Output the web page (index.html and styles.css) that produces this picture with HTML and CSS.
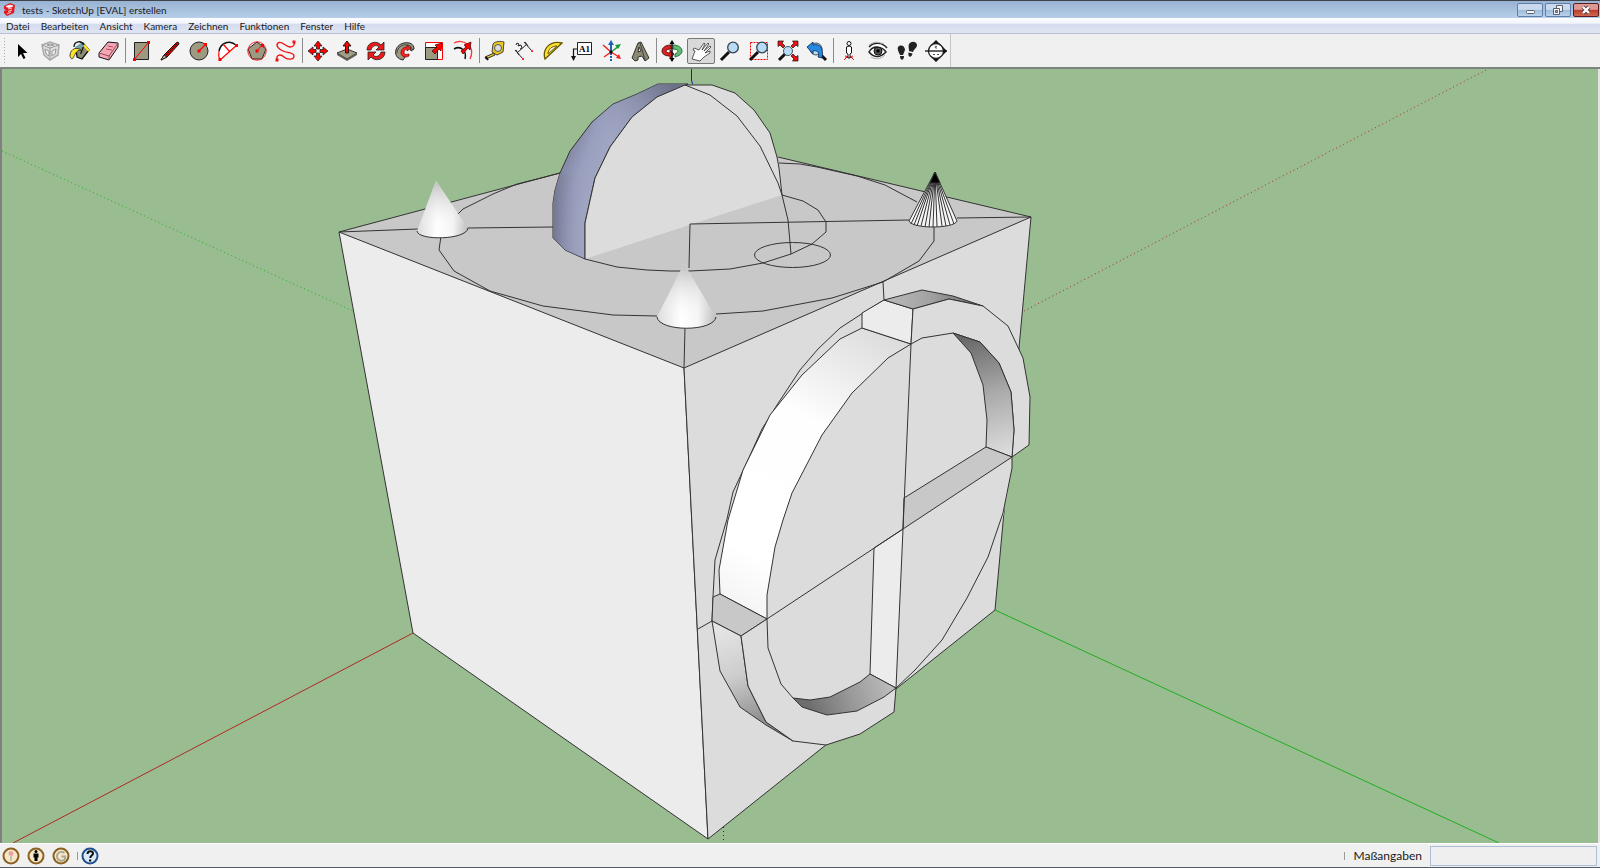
FILE: index.html
```html
<!DOCTYPE html>
<html lang="de">
<head>
<meta charset="utf-8">
<title>tests - SketchUp [EVAL] erstellen</title>
<link rel="stylesheet" href="styles.css">
</head>
<body>
<header class="titlebar">
  <svg class="logo" viewBox="0 0 12 13" aria-hidden="true"><path d="M1 3 7 0l5 2-1 8-7 3-3-3V8l2-1-2-1z" fill="#e01b22"/><path d="M3 3.500 7 2l3 1-4 1.500zM5 6l4-1M5 8.500 9 7M4 11l4-2" stroke="#fff" fill="#fff" stroke-width=".8"/></svg>
  <h1 class="title">tests - SketchUp [EVAL] erstellen</h1>
  <div class="winbtns">
    <button class="win" aria-label="Minimieren"><svg viewBox="0 0 24 12"><rect x="8.500" y="6.500" width="8" height="3" rx="1" fill="#f6f6f6" stroke="#59616e"/></svg></button>
    <button class="win" aria-label="Wiederherstellen"><svg viewBox="0 0 24 12"><g fill="#f4f4f4" stroke="#59616e"><path d="M10.500 1.500h6v6h-6z"/><path d="M7.500 4.500h6v6h-6z"/><path d="M9.500 6.500h2v2h-2z" fill="#8ea8c8"/></g></svg></button>
    <button class="win close" aria-label="Schließen"><svg viewBox="0 0 24 12"><path d="m9 3 6 6m0-6-6 6" stroke="#5a3b40" stroke-width="4"/><path d="m9 3 6 6m0-6-6 6" stroke="#fff" stroke-width="2.400"/></svg></button>
  </div>
</header>

<nav class="menubar">
  <button>Datei</button><button>Bearbeiten</button><button>Ansicht</button><button>Kamera</button><button>Zeichnen</button><button>Funktionen</button><button>Fenster</button><button>Hilfe</button>
</nav>

<div class="toolrow">
<div class="toolbar" role="toolbar" aria-label="Werkzeuge">
  <button aria-label="Auswählen"><svg viewBox="0 0 22 22"><path d="M7 4v13l3-3 2.500 5 2-1-2.500-5h4.500z" fill="#000"/></svg></button>
  <button aria-label="Komponente"><svg viewBox="0 0 22 22"><path d="m2 5 8-3 9 3-1 10-8 5-6-5z" fill="#ddd" stroke="#aaa" stroke-width="1.500"/><path d="m2 5 8 3 9-3M10 8v12M5 9l4 2v5l-3-2zM12 11l4-2-1 5-3 2zM7 5l3-1 4 1-4 1z" fill="#eee" stroke="#999"/></svg></button>
  <button aria-label="Farbeimer"><svg viewBox="0 0 22 22"><path d="m7 9 7-6 6 7-7 9-5-2z" fill="#8d8b72" stroke="#111" stroke-width="1.300"/><path d="M5 7c0-6 8-7 9-2s-3 7-2 9" fill="none" stroke="#111" stroke-width="1.300"/><path d="m6 7 6-4 3 3-7 5z" fill="#6fa1ad"/><path d="M1 15c1-7 7-8 11-5-5 0-6 5-8 8-1 2-3 0-3-3z" fill="#ffe51f" stroke="#222" stroke-width=".8"/><path d="m15 5 5 6" stroke="#ffe51f" stroke-width="2"/></svg></button>
  <button aria-label="Radiergummi"><svg viewBox="0 0 22 22"><path d="M1 13 10 2l10 1v4l-9 13-10-3z" fill="#f5a7b5" stroke="#111"/><path d="m1 13 10 3 9-13M11 16v4" fill="none" stroke="#9a4c5c"/><path d="m8 9 6 1m-4-4 5 1" stroke="#b24b60"/></svg></button>
  <span class="sep"></span>
  <button aria-label="Rechteck"><svg viewBox="0 0 22 22"><path d="M4.500 2.500h14v17h-14z" fill="#9c9a80" stroke="#222"/><path d="m4 20 15-18" stroke="#f00"/><path d="M3 18h3v3H3zM17 1h3v3h-3z" fill="#f00"/></svg></button>
  <button aria-label="Linie"><svg viewBox="0 0 22 22"><path d="M2 20 5 15 17 3l2-1 1 2L8 17z" fill="#dc0000" stroke="#111"/><path d="m2 20 3-5 3 2z" fill="#c6b98f" stroke="#111" stroke-width=".8"/><path d="M7 15 18 4" stroke="#500"/></svg></button>
  <button aria-label="Kreis"><svg viewBox="0 0 22 22"><circle cx="11" cy="11" r="9" fill="#9c9a80" stroke="#222"/><path d="m11 11 7-7" stroke="#f00" stroke-width="1.300"/><path d="M9.500 9.500h3v3h-3zM16 3h3v3h-3z" fill="#f00"/></svg></button>
  <button aria-label="Bogen"><svg viewBox="0 0 22 22"><path d="M3 20Q1 15 2 11C4 2 13 0 20 5z" fill="#fff"/><path d="M2 11C4 2 13 0 19 5" fill="none" stroke="#111" stroke-width="1.500"/><path d="M2 11Q1 16 3 20L20 5M6 4l7 8" fill="none" stroke="#f00" stroke-width="1.200"/><path d="M1.500 18h3v3h-3zM18 4h3v3h-3z" fill="#f00"/></svg></button>
  <button aria-label="Polygon"><svg viewBox="0 0 22 22"><path d="m11 2 9 7-4 10H6L2 9z" fill="#9c9a80" stroke="#222"/><circle cx="11" cy="11" r="9.200" fill="none" stroke="#e22"/><path d="m11 11 5-6" stroke="#f00"/><path d="M9.500 9.500h3v3h-3zM15 4h3v3h-3z" fill="#f00"/></svg></button>
  <button aria-label="Freihand"><svg viewBox="0 0 22 22"><path d="M2 20C1 14 6 14 9 17s10 3 10-1-7-3-11-5-8-5-5-8 8 4 12 4 5-3 4-5" fill="none" stroke="#e11" stroke-width="1.300"/><path d="M.5 18.500h3v3h-3zM17.500 .5h3v3h-3z" fill="#e11"/></svg></button>
  <span class="sep"></span>
  <button aria-label="Verschieben"><svg viewBox="0 0 22 22"><g fill="#f00" stroke="#222" stroke-width=".8"><path d="M11 1l4 5h-2.500v3h-3V6H7z"/><path d="M11 21l4-5h-2.500v-3h-3v3H7z"/><path d="M1 11l5-4v2.500h3v3H6V15z"/><path d="M21 11l-5-4v2.500h-3v3h3V15z"/></g></svg></button>
  <button aria-label="Drücken/Ziehen"><svg viewBox="0 0 22 22"><path d="m1 13 10-4 10 4-10 6z" fill="#a09e84" stroke="#333"/><path d="m1 13 10 6 10-6v2l-10 6-10-6z" fill="#626052"/><path d="m11 1 4 5h-2.500v7h-3V6H7z" fill="#f00" stroke="#111" stroke-width=".9"/></svg></button>
  <button aria-label="Drehen"><svg viewBox="0 0 22 22"><g fill="#f01818" stroke="#222" stroke-width=".8"><path d="M2 10C2 2 12 0 16 5l3-3v8h-8l3-3c-3-3-7-1-8 3z"/><path d="M20 12c0 8-10 10-14 5l-3 3v-8h8l-3 3c3 3 7 1 8-3z"/></g></svg></button>
  <button aria-label="Folge mir"><svg viewBox="0 0 22 22"><path d="M9 20C-2 18 0 5 10 3c6-1 10 1 10 6l-3 2c0-4-9-4-9 1 0 3 3 5 3 5z" fill="#9c9a80" stroke="#222"/><path d="M3 13c0-5 5-9 10-8 3 0 5 2 5 5" stroke="#444" fill="none"/><path d="M15 16c-5 3-8-1-8-3 0-4 3-6 6-6V5l4 3-4 3V9c-2 0-3 2-3 4 0 1 2 2 5 1z" fill="#f22" stroke="#700" stroke-width=".7"/></svg></button>
  <button aria-label="Skalieren"><svg viewBox="0 0 22 22"><path d="M2.500 2.500h17v17h-17z" fill="#fff" stroke="#f00"/><path d="M2.500 7.500h12v12h-12z" fill="#9c9a80" stroke="#222"/><path d="m19 3-1 8-2-2-4 5-3-3 5-4-2-2z" fill="#f00" stroke="#400" stroke-width=".7"/></svg></button>
  <button aria-label="Versatz"><svg viewBox="0 0 22 22"><path d="M2 3c9-5 22 3 16 16" fill="none" stroke="#f33" stroke-width="1.300"/><path d="M2 9c7-4 13 2 11 10" fill="none" stroke="#111" stroke-width="1.500"/><path d="m19 2-1 8-2-2-5 6-2-3 5-4-2-2z" fill="#f00" stroke="#400" stroke-width=".7"/></svg></button>
  <span class="sep"></span>
  <button aria-label="Maßband"><svg viewBox="0 0 22 22"><path d="m1 17 9-4 1 2-9 4z" fill="#e9c818" stroke="#333"/><path d="M9 4c2-3 8-3 11-2l-1 10-6 3-5-3z" fill="#e9c818" stroke="#444"/><circle cx="14" cy="8" r="3.500" fill="#ddd" stroke="#555"/><path d="m2 17 2 3" stroke="#111" stroke-width="2"/></svg></button>
  <button aria-label="Bemaßung"><svg viewBox="0 0 22 22"><path d="m4 13 10-9M2 10l8 9M11 2l8 9M3 10l3 5M12 2l3 4" fill="none" stroke="#222"/><path d="m3 5 1-2 2 1-1 2 3-1 1 3-2 1" fill="none" stroke="#222"/><path d="M9 18h2v2H9zM18 10h2v2h-2z" fill="#e33"/></svg></button>
  <button aria-label="Winkelmesser"><svg viewBox="0 0 22 22"><path d="M3 19C0 9 8 0 20 3z" fill="#ffe22e" stroke="#665900" stroke-width="1.300"/><path d="M6 14c0-5 4-8 9-8z" fill="#f0f0f0" stroke="#665900"/></svg></button>
  <button aria-label="Text"><svg viewBox="0 0 22 22"><path d="M6.500 2.500h14v12h-14z" fill="#fff" stroke="#222"/><path d="M6 9H2.500v9" fill="none" stroke="#111" stroke-width="1.200"/><path d="M0 16h5l-2.500 5z" fill="#111"/><text x="8" y="12" class="icontext">A1</text></svg></button>
  <button aria-label="Achsen"><svg viewBox="0 0 22 22"><path d="M11 3v9" stroke="#1f5fb5" stroke-width="2"/><path d="m8 5 3-5 3 5z" fill="#1f5fb5"/><path d="M11 13v8" stroke="#1f5fb5" stroke-width="2" stroke-dasharray="2 1"/><path d="m11 12 8-6" stroke="#159a35" stroke-width="1.500"/><path d="m15 5 6-1-3 5z" fill="#159a35"/><path d="m11 12 8 5M3 5l8 7-7 5" fill="none" stroke="#e22" stroke-width="1.400"/><path d="m21 19-2-5-3 4z" fill="#e22"/><circle cx="11" cy="12" r="1.500"/></svg></button>
  <button aria-label="3D-Text"><svg viewBox="0 0 22 22"><path d="m3 18 6-15 3-1 8 16-4 3-3-5-4 1v3l-3 1z" fill="#8b8970" stroke="#333"/><path d="m9 12 1-5 2 4z" fill="#f0f0f0" stroke="#333"/><path d="m11 3 5 17" stroke="#444"/></svg></button>
  <span class="sep"></span>
  <button aria-label="Rotieren"><svg viewBox="0 0 22 22"><path d="M10 5C4 5 1 8 1 11s3 5 8 5v3l4-5-4-4v3c-3 0-4-1-4-2s2-2 5-2z" fill="#d92323" stroke="#400" stroke-width=".8"/><path d="M12 5c6 0 9 3 9 6s-3 5-7 6v-3c2-1 3-2 3-3s-2-2-5-2z" fill="#62bd72" stroke="#153" stroke-width=".8"/><path d="M11 2v18" stroke="#111" stroke-width="1.500"/><path d="m8.500 4 2.500-4 2.500 4zM8.500 18l2.500 4 2.500-4z"/></svg></button>
  <button class="active" aria-label="Schwenken" aria-pressed="true"><svg viewBox="0 0 22 22"><path d="m2 19 3-8-2-1 1-2 5 2 5-7 1 1-3 6 6-7 1 1-5 7 6-5 1 1-6 6 5-2v2l-6 4-4 4-4-1z" fill="#fff" stroke="#333" stroke-width=".8"/></svg></button>
  <button aria-label="Zoomen"><svg viewBox="0 0 22 22"><path d="m2 20 8-8" stroke="#111" stroke-width="3"/><circle cx="14" cy="7.500" r="5.300" fill="#b9dcf5" stroke="#345" stroke-width="1.300"/></svg></button>
  <button aria-label="Fenster zoomen"><svg viewBox="0 0 22 22"><path d="M2.500 2.500h17v17h-17z" fill="none" stroke="#f00" stroke-dasharray="2 1"/><path d="m2 20 8-8" stroke="#111" stroke-width="3"/><circle cx="14" cy="7.500" r="5.300" fill="#b9dcf5" stroke="#345" stroke-width="1.300"/></svg></button>
  <button aria-label="Alles zoomen"><svg viewBox="0 0 22 22"><path d="m2 20 6-6" stroke="#111" stroke-width="3"/><circle cx="11" cy="11" r="4.500" fill="#b9dcf5" stroke="#456"/><g fill="#e11" stroke="#111" stroke-width=".7"><path d="M1 1h5.500L5 3l3 3-2 2-3-3-2 1.500z"/><path d="M21 1h-5.500L17 3l-3 3 2 2 3-3 2 1.500z"/><path d="M21 21h-5.500l1.500-2-3-3 2-2 3 3 2-1.500z"/></g></svg></button>
  <button aria-label="Vorherige Ansicht"><svg viewBox="0 0 22 22"><path d="m13 13 7 7" stroke="#111" stroke-width="3"/><circle cx="10" cy="9" r="6" fill="#b9dcf5" stroke="#456"/><path d="m1 7 6-5v3c7-2 11 3 9 13l-4-1c2-5-1-7-5-6v3z" fill="#2588e2" stroke="#124" stroke-width=".8"/></svg></button>
  <span class="sep"></span>
  <button aria-label="Kamera positionieren"><svg viewBox="0 0 22 22"><path d="m11 15-5 5m5-5 5 5M7 16l8 2m0-2-8 2" stroke="#e22" fill="none"/><circle cx="11" cy="3.500" r="2" fill="#fff" stroke="#111"/><path d="M8.500 7q2.500-2 5 0v6l-1.500 1v4h-2v-4l-1.500-1z" fill="#fff" stroke="#111"/></svg></button>
  <button aria-label="Umsehen"><svg viewBox="0 0 22 22"><path d="M2 7c5-5 13-5 18 1M2 12c4-7 13-6 17 0-6 6-12 6-17 0z" fill="#fff" stroke="#222" stroke-width="1.500"/><circle cx="11" cy="11" r="4" fill="#555" stroke="#111"/><circle cx="11" cy="11" r="1.800" fill="#000"/><path d="M4 17c5 3 10 2 14-2M2 5c5-4 10-3 15-1" fill="none" stroke="#aaa"/></svg></button>
  <button aria-label="Gehen"><svg viewBox="0 0 22 22"><path d="M2 7c3-3 7-1 7 3l-2 5H4C3 12 1 10 2 7zM4 16h4c0 5-4 5-4 0zM13 4c3-4 8-2 8 1s-3 4-4 7l-4-1c0-3-1-5 0-7zM12.500 12.500l4 1c-1 5-5 4-4-1z" fill="#222"/></svg></button>
  <button aria-label="Schnittebene"><svg viewBox="0 0 22 22"><path d="m11 0 5 5H6zM11 22l5-5H6zM22 11l-5-5v10z" fill="#111"/><circle cx="11" cy="11" r="7.500" fill="#fff" stroke="#222" stroke-width="1.300"/><path d="M0 11h22" stroke="#111" stroke-width="1.300"/><path d="M12 6.500q-2-1-2 .5t2 1M8 14.500h2m2 0h2" fill="none" stroke="#555"/></svg></button>
</div>
</div>

<main class="viewport">
<svg viewBox="2 69 1596 774" preserveAspectRatio="xMidYMid slice" role="img" aria-label="3D-Modell">
  <defs>
    <linearGradient id="cone" x1="0" x2="1"><stop offset="0" stop-color="#d8d8d8"/><stop offset=".4" stop-color="#fff"/><stop offset=".7" stop-color="#f4f4f4"/><stop offset="1" stop-color="#b4b4b4"/></linearGradient>
    <linearGradient id="coneShade" x1="0" x2="0" y1="0" y2="1"><stop offset="0" stop-color="#b8b8b8" stop-opacity=".9"/><stop offset=".85" stop-color="#fff" stop-opacity=".1"/></linearGradient>
    <linearGradient id="dome" gradientUnits="userSpaceOnUse" x1="566" y1="140" x2="604" y2="155"><stop offset="0" stop-color="#7b7f9b"/><stop offset=".6" stop-color="#999fbe"/><stop offset="1" stop-color="#a0a5c2"/></linearGradient>
    <linearGradient id="domeLow" gradientUnits="userSpaceOnUse" x1="553" y1="0" x2="590" y2="0"><stop offset="0" stop-color="#72768f"/><stop offset=".6" stop-color="#9499b7" stop-opacity=".5"/><stop offset="1" stop-color="#a0a5c2" stop-opacity="0"/></linearGradient>
    <linearGradient id="domeTop" gradientUnits="userSpaceOnUse" x1="670" y1="83" x2="610" y2="140"><stop offset="0" stop-color="#6c7088"/><stop offset="1" stop-color="#9298b8" stop-opacity="0"/></linearGradient>
    <linearGradient id="band" gradientUnits="userSpaceOnUse" x1="880" y1="330" x2="720" y2="610"><stop offset="0" stop-color="#dcdcdc"/><stop offset=".35" stop-color="#fefefe"/><stop offset=".8" stop-color="#fff"/><stop offset="1" stop-color="#f2f2f2"/></linearGradient>
    <linearGradient id="arc" gradientUnits="userSpaceOnUse" x1="970" y1="335" x2="1000" y2="455"><stop offset="0" stop-color="#666"/><stop offset=".5" stop-color="#aaa"/><stop offset="1" stop-color="#dcdcdc"/></linearGradient>
    <linearGradient id="cap" gradientUnits="userSpaceOnUse" x1="890" y1="305" x2="970" y2="296"><stop offset="0" stop-color="#b8b8b8"/><stop offset=".5" stop-color="#a2a2a2"/><stop offset="1" stop-color="#777"/></linearGradient>
    <linearGradient id="side" gradientUnits="userSpaceOnUse" x1="720" y1="630" x2="755" y2="722"><stop offset="0" stop-color="#e4e4e4"/><stop offset=".5" stop-color="#ccc"/><stop offset="1" stop-color="#909090"/></linearGradient>
    <linearGradient id="bowl" gradientUnits="userSpaceOnUse" x1="810" y1="712" x2="890" y2="682"><stop offset="0" stop-color="#6d6d6d"/><stop offset=".5" stop-color="#989898"/><stop offset="1" stop-color="#bcbcbc"/></linearGradient>
  </defs>

  <path class="ax-green dotted" d="M2 151 353 311"/>
  <path class="ax-red dotted" d="M1024 311 1488 69"/>
  <path class="ax-red" d="M413 633 13 843"/>
  <path class="ax-green" d="M995 610 1499 843"/>
  <path class="ax-blue dotted" d="M723.500 827V843"/>

  <g class="edge">
    <path fill="#c8c8c8" d="M339 232 560 173 778 157 1031 217 684 368z" stroke="none"/>
    <path fill="#ececec" d="M339 232 684 368 708 839 413 633z"/>
    <path fill="#dcdcdc" d="M684 368 1031 217 995 610 708 839z"/>
    <path class="line" d="M339 232 560 173M778 157l253 60"/>
    <path class="line" d="M560 173 537 179 517 184 493 194 463 209 450 222M441 236 439 250 454 271 490 291 543 306 613 315 657 316M716 314 763 311 832 298 883 282 919 261 934 241V227M917 202 885 185 857 176 817 167 800 164 779 163"/>
    <path class="line" d="M339 232 418 229M468 228l85-1M685 328l-1 40"/>

    <path fill="url(#dome)" d="M585 259 565 250 553 238V203L555 190 560 173 570 151 592 122 613 104 637 94 658 84H688L657 97 632 117 610 147 595 178 585 223z"/>
    <path fill="url(#domeLow)" stroke="none" d="M585 259 565 250 553 238V203L555 190 560 173 595 178 585 223z"/>
    <path fill="url(#domeTop)" stroke="none" d="M570 151 592 122 613 104 637 94 658 84H688L657 97 632 117 610 147 600 165z"/>
    <path fill="#dcdcdc" stroke="none" d="M585 259V223L595 178 610 147 632 117 657 97 685 85H712L735 93 754 110 770 133 777 157 779 168 782 195z"/>
    <path class="line" d="M585 259V223L595 178 610 147 632 117 657 97 685 85H712L735 93 754 110 770 133 777 157 779 168 782 195"/>
    <path class="line" d="M685 85 710 95 737 116 760 146 778 183 782 195 788 220 791 254"/>
    <path class="line" d="M585 259 617 267 647 270 670 271H690L730 269 763 263 791 254 812 244 826 232V222L818 210 803 201 782 195"/>
    <ellipse class="line" cx="792.500" cy="255" rx="38" ry="12.500"/>
    <path class="line" d="M689 268 690 224 909 220M957 218l74-1"/>

    <path fill="url(#cone)" stroke="none" d="M436 181 468 228C467 240 418 241 417 231z"/>
    <path fill="url(#coneShade)" stroke="none" d="M436 181 468 228C467 240 418 241 417 231z"/>
    <path class="line" d="M417 231C418 241 467 240 468 228"/>
    <path fill="url(#cone)" stroke="none" d="M684 264 716 317C714 332 659 332 657 317z"/>
    <path fill="url(#coneShade)" stroke="none" d="M684 264 716 317C714 332 659 332 657 317z"/>
    <path class="line" d="M657 317C659 332 714 332 716 317"/>
    <path fill="#f4f4f4" d="M935 172 957 221C954 229 912 229 909 221z"/>
    <path class="line" d="M935 172 911 224M935 172 914 225M935 172 917 226M935 172 921 226M935 172 925 227M935 172 929 227M935 172 933 227M935 172 937 227M935 172 942 226M935 172 946 226M935 172 950 225M935 172 954 224"/>
    <path fill="#000" d="m935 172-5 11h10z"/>

    <path fill="#dcdcdc" stroke="none" d="M903 529 1012 457 1012 468 1003 517 988 557z"/>
    <path class="line" d="M883 282 884 300M1012 457V468L1003 513 988 557 967 598 942 640 915 670 896 688"/>
    <path class="line" d="M884 300 863 313 840 328 818 349 800 370 777 405 762 429 747 462 733 492 727 519 715 560 713 597 712 621 698 629"/>
    <path fill="url(#band)" d="M862 328 840 339 802 375 770 415 743 470 728 520 719 570 720 594 767 619V595L775 547 783 520 792 493 822 435 852 393 888 358 911 344z"/>
    <path fill="#ececec" d="M884 300 913 309 911 344 862 328V313z"/>
    <path fill="url(#cap)" d="M884 300 922 290 953 296 983 306 949 299 913 309z"/>
    <path fill="#dcdcdc" d="M913 309 949 299 983 306 1008 326 1023 358 1030 397 1029 445 1012 457 1014 430 1011 392 999 363 980 342 953 333 922 338 911 344z"/>
    <path fill="url(#arc)" d="M953 333 980 342 999 363 1011 392 1014 430 1012 457 986 447 987 420 983 385 971 353z"/>
    <path fill="#c8c8c8" d="M986 447 1012 457 903 529 904 498z"/>
    <path fill="#ececec" d="M874 548 903 529 896 688 870 674z"/>
    <path class="line" d="M911 344 903 529 767 619"/>
    <path fill="#c8c8c8" d="M712 621 713 597 720 594 767 619 741 636z"/>
    <path fill="url(#side)" d="M712 621 720 671 740 707 766 725 793 741 766 722 748 686 741 636z"/>
    <path fill="#dcdcdc" d="M741 636 748 686 766 722 793 741 826 745 860 734 894 692 896 688 884 697 857 711 827 715 802 707 793 698 781 684 768 648 767 619z" stroke="none"/>
    <path fill="#dcdcdc" stroke="none" d="M860 734 894 712 896 688 857 711z"/>
    <path class="line" d="M741 636 748 686 766 722 793 741 826 745 860 734 894 712 896 688M767 619 768 648 781 684 793 698M741 636 767 619"/>
    <path fill="url(#bowl)" d="M793 698 810 700 830 697 860 682 870 674 896 688 884 697 857 711 827 715 802 707z"/>
  </g>
  <path class="ax-blue" d="M691.500 69v11l1 4"/>
</svg>
</main>

<footer class="status">
  <button class="round" aria-label="Geo-Position"><svg viewBox="0 0 18 18"><circle cx="9" cy="9" r="7.500" fill="#f4e8c8" stroke="#8a6122" stroke-width="2"/><path d="M9 14V9" stroke="#999"/><circle cx="9" cy="6.500" r="2.500" fill="#eba3a0"/></svg></button>
  <button class="round" aria-label="Urheber"><svg viewBox="0 0 18 18"><circle cx="9" cy="9" r="7.500" fill="#f4e8c8" stroke="#8a6122" stroke-width="2"/><circle cx="9" cy="4.500" r="1.500"/><path d="M6.500 6.500h5v4h-1V14h-3v-3.500h-1z"/></svg></button>
  <button class="round" aria-label="Anmelden"><svg viewBox="0 0 18 18"><circle cx="9" cy="9" r="7.500" fill="#f4e8c8" stroke="#8a6122" stroke-width="2"/><path d="M12.500 6A4.500 4.500 0 1 0 13 12V9.500H9.500" fill="none" stroke="#a9a690" stroke-width="1.800"/></svg></button>
  <span class="tick first"></span>
  <button class="round" aria-label="Hilfe"><svg viewBox="0 0 18 18"><circle cx="9" cy="9" r="7.500" fill="#d9eafa" stroke="#214f8c" stroke-width="2"/><path d="M6.500 7c0-4 5.500-3.500 5.500-.5C12 8.500 9.200 8.500 9.200 11" fill="none" stroke="#111" stroke-width="2"/><path d="M8 12.500h2.200v2H8z"/></svg></button>
  <span class="tick last"></span>
  <label for="dims">Maßangaben</label>
  <input id="dims" type="text">
</footer>
</body>
</html>
```
FILE: styles.css
```css
* { box-sizing: border-box; }

body {
  margin: 0;
  height: 100vh;
  display: flex;
  flex-direction: column;
  overflow: hidden;
  background: #f0f0f0;
  border-bottom: 1px solid #565c66;
  font-family: Lato, "Open Sans", sans-serif;
  font-size: 10px;
  color: #1a1a1a;
}

button {
  margin: 0;
  padding: 0;
  border: 0;
  background: none;
  font: inherit;
  color: inherit;
}

svg { display: block; }

.titlebar {
  flex: none;
  height: 18px;
  display: flex;
  align-items: center;
  padding: 0 1px 0 3px;
  border-top: 1px solid #3f444c;
  background: linear-gradient(#98b2d2, #b6cee8);
}
.logo { width: 12px; height: 13px; }
.title {
  flex: 1;
  margin: 0 0 0 7px;
  font-size: 10px;
  font-weight: 400;
  line-height: 16px;
}
.winbtns { display: flex; gap: 2px; }
.win {
  width: 26px;
  height: 14px;
  border: 1px solid #5f7fa8;
  border-radius: 2px;
  background: linear-gradient(#c9daee 45%, #9dbbdc 50%, #b9d2ec);
}
.win.close {
  border-color: #5b1d22;
  background: linear-gradient(#dc9a92 45%, #b93a2a 50%, #cf6a52);
}
.win svg { width: 24px; height: 12px; }

.menubar {
  flex: none;
  height: 16px;
  display: flex;
  gap: 11px;
  padding-left: 6px;
  border-bottom: 1px solid #b8bfd0;
  background: linear-gradient(#fdfdff 0, #f1f4fb 35%, #d5dcee 42%, #dfe5f3);
}
.menubar button { padding-top: 2px; line-height: 13px; }

.toolrow { flex: none; display: flex; height: 33px; background: #f0f0f0; }
.toolbar {
  display: flex;
  align-items: center;
  gap: 1px;
  padding: 0 0 0 8px;
  border-right: 1px solid #c4c4c4;
  background:
    repeating-linear-gradient(#a8a8a8 0 1px, transparent 1px 3px) 4px 4px / 1px 26px no-repeat,
    #f3f3f3;
}
.toolbar button {
  width: 28px;
  height: 26px;
  display: grid;
  place-items: center;
  border: 1px solid transparent;
  border-radius: 2px;
}
.toolbar .active {
  border-color: #777;
  background: #d9d9d9;
}
.toolbar svg { width: 22px; height: 22px; }
.sep { width: 1px; height: 25px; margin-left: 1px; background: #8c8c8c; }
.icontext { font: bold 9px "Liberation Serif", serif; }

.viewport {
  flex: 1;
  min-height: 0;
  border: solid #808080;
  border-width: 2px 0 0 2px;
  border-top-color: #7d8580;
  box-shadow: inset -2px 0 #e3e3e3;
  padding-right: 2px;
}
.viewport svg { width: 100%; height: 100%; background: #9abc91; }
.edge { stroke: #333; stroke-width: 1; stroke-linejoin: round; }
.line { fill: none; }
.ax-red { stroke: #b02a22; fill: none; }
.ax-green { stroke: #1fae1f; fill: none; }
.ax-blue { stroke: #1a1ac0; fill: none; }
.dotted { stroke-dasharray: 1 3; }

.status {
  flex: none;
  height: 24px;
  display: flex;
  align-items: center;
  padding: 0 3px 0 2px;
  border-top: 1px solid #fff;
  font-size: 12px;
}
.round { margin-right: 7px; }
.round svg { width: 18px; height: 18px; }
.tick { width: 1px; height: 8px; background: #999; }
.tick.first { margin-right: 3px; }
.tick.last { margin: 0 8px 0 auto; }
.status input {
  width: 167px;
  height: 20px;
  margin-left: 8px;
  border: 1px solid #abc0d4;
  background: #efefef;
  font: inherit;
}
```
